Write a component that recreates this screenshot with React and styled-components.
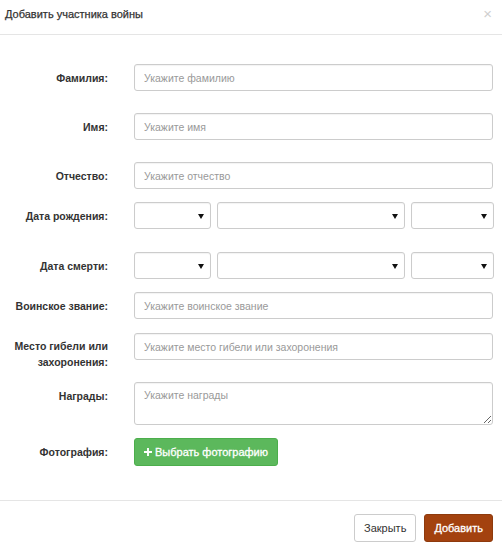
import React from "react";
import styled, { createGlobalStyle } from "styled-components";

const GlobalStyle = createGlobalStyle`
  * { box-sizing: border-box; }
  html, body { margin: 0; padding: 0; background: #fff; }
  body {
    font-family: "Liberation Sans", Arial, sans-serif;
    color: #333;
  }
`;

const Modal = styled.div`
  width: 502px;
  height: 549px;
  background: #fff;
  display: flex;
  flex-direction: column;
`;

const Header = styled.div`
  height: 35px;
  border-bottom: 1px solid #e5e5e5;
  display: flex;
  align-items: flex-start;
  justify-content: space-between;
  padding: 7px 10px 0 5px;
`;

const Title = styled.h4`
  margin: 0;
  font-size: 11px;
  line-height: 14px;
  font-weight: normal;
  color: #333;
  -webkit-text-stroke: 0.25px #333;
`;

const Close = styled.button`
  border: none;
  background: none;
  padding: 0;
  font-size: 15px;
  line-height: 14px;
  color: #cfcfcf;
  font-family: "Liberation Sans", Arial, sans-serif;
`;

const Body = styled.div`
  flex: 1;
  padding: 29px 9px 0 10px;
  display: flex;
  flex-direction: column;
`;

const Row = styled.div`
  display: grid;
  grid-template-columns: 98px 359px;
  column-gap: 26px;
  margin-bottom: ${(p) => p.$mb}px;
`;

const Label = styled.label`
  text-align: right;
  font-size: 10.5px;
  font-weight: bold;
  color: #333;
  line-height: 16px;
  padding-top: ${(p) => (p.$pt != null ? p.$pt : 6)}px;
`;

const Input = styled.input`
  width: 100%;
  height: 27px;
  border: 1px solid #ccc;
  border-radius: 3px;
  padding: 0 9px;
  font-size: 10.5px;
  font-family: "Liberation Sans", Arial, sans-serif;
  color: #555;
  box-shadow: inset 0 1px 1px rgba(0, 0, 0, 0.05);
  &::placeholder { color: #999; }
`;

const TextArea = styled.textarea`
  width: 100%;
  height: 43px;
  border: 1px solid #ccc;
  border-radius: 3px;
  padding: 6px 9px;
  font-size: 10.5px;
  font-family: "Liberation Sans", Arial, sans-serif;
  box-shadow: inset 0 1px 1px rgba(0, 0, 0, 0.05);
  display: block;
  &::placeholder { color: #999; }
`;

const Selects = styled.div`
  display: grid;
  grid-template-columns: 77px 188px 83px;
  column-gap: 6px;
`;

const SelectWrap = styled.div`
  position: relative;
  height: 27px;
  border: 1px solid #ccc;
  border-radius: 3px;
  box-shadow: inset 0 1px 1px rgba(0, 0, 0, 0.05);
  &::after {
    content: "";
    position: absolute;
    right: 6px;
    top: 11px;
    border-left: 3px solid transparent;
    border-right: 3px solid transparent;
    border-top: 5px solid #111;
  }
  select {
    appearance: none;
    -webkit-appearance: none;
    width: 100%;
    height: 100%;
    border: none;
    background: transparent;
    font-size: 11px;
  }
`;

const Btn = styled.button`
  height: 28px;
  border-radius: 3px;
  font-size: 11px;
  font-family: "Liberation Sans", Arial, sans-serif;
  padding: 0 ${(p) => p.$px || 9}px;
  display: inline-flex;
  align-items: center;
  gap: 3px;
  cursor: pointer;
  border: 1px solid ${(p) => p.$border};
  background: ${(p) => p.$bg};
  color: ${(p) => p.$color};
  ${(p) => p.$bold && "-webkit-text-stroke: 0.3px currentColor;"}
`;

const Plus = styled.svg`
  width: 8px;
  height: 8px;
`;

const Footer = styled.div`
  height: 49px;
  border-top: 1px solid #e5e5e5;
  display: flex;
  justify-content: flex-end;
  align-items: flex-start;
  gap: 8px;
  padding: 13px 9px 0 0;
`;

function DateSelects() {
  return (
    <Selects>
      <SelectWrap><select defaultValue="" /></SelectWrap>
      <SelectWrap><select defaultValue="" /></SelectWrap>
      <SelectWrap><select defaultValue="" /></SelectWrap>
    </Selects>
  );
}

export default function App() {
  return (
    <>
      <GlobalStyle />
      <Modal>
        <Header>
          <Title>Добавить участника войны</Title>
          <Close>×</Close>
        </Header>
        <Body>
          <Row $mb={22}>
            <Label>Фамилия:</Label>
            <Input placeholder="Укажите фамилию" />
          </Row>
          <Row $mb={22}>
            <Label>Имя:</Label>
            <Input placeholder="Укажите имя" />
          </Row>
          <Row $mb={13}>
            <Label>Отчество:</Label>
            <Input placeholder="Укажите отчество" />
          </Row>
          <Row $mb={23}>
            <Label>Дата рождения:</Label>
            <DateSelects />
          </Row>
          <Row $mb={13}>
            <Label>Дата смерти:</Label>
            <DateSelects />
          </Row>
          <Row $mb={14}>
            <Label>Воинское звание:</Label>
            <Input placeholder="Укажите воинское звание" />
          </Row>
          <Row $mb={12}>
            <Label $pt={5}>
              Место гибели или
              <br />
              захоронения:
            </Label>
            <Input placeholder="Укажите место гибели или захоронения" />
          </Row>
          <Row $mb={13}>
            <Label $pt={6}>Награды:</Label>
            <TextArea placeholder="Укажите награды" />
          </Row>
          <Row $mb={0}>
            <Label $pt={6}>Фотография:</Label>
            <div>
              <Btn $bg="#5cb85c" $border="#4cae4c" $color="#fff" $bold>
                <Plus viewBox="0 0 10 10">
                  <path d="M3.8 0h2.4v3.8H10v2.4H6.2V10H3.8V6.2H0V3.8h3.8z" fill="#fff" />
                </Plus>
                Выбрать фотографию
              </Btn>
            </div>
          </Row>
        </Body>
        <Footer>
          <Btn $bg="#fff" $border="#ccc" $color="#333">
            Закрыть
          </Btn>
          <Btn $bg="#a3420f" $border="#8e3a0d" $color="#fff" $bold>
            Добавить
          </Btn>
        </Footer>
      </Modal>
    </>
  );
}
